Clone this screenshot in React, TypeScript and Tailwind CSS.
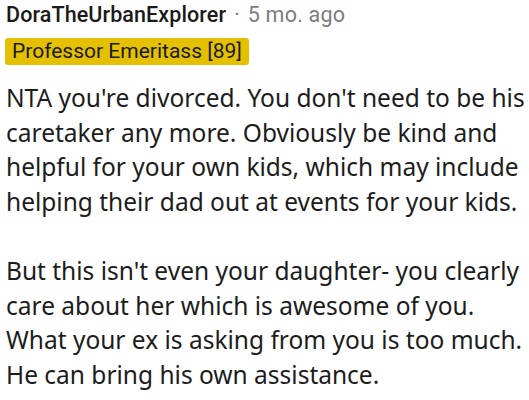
const para1 = [
  "NTA you're divorced. You don't need to be his",
  "caretaker any more. Obviously be kind and",
  "helpful for your own kids, which may include",
  "helping their dad out at events for your kids.",
];

const para2 = [
  "But this isn't even your daughter- you clearly",
  "care about her which is awesome of you.",
  "What your ex is asking from you is too much.",
  "He can bring his own assistance.",
];

export default function App() {
  return (
    <div className="w-[529px] h-[400px] overflow-hidden bg-white px-[6px] pt-[1px]">
      <div className="flex items-baseline text-[21.5px] leading-[28px] font-['Roboto',sans-serif]">
        <span className="font-medium text-[#1a1a1b] tracking-[0.1px]">DoraTheUrbanExplorer</span>
        <span className="ml-[8px] text-[#7c7c7c]">·</span>
        <span className="ml-[8px] text-[#7c7c7c] tracking-[0.2px]">5 mo. ago</span>
      </div>
      <div className="mt-[9px] -ml-[1px] inline-block rounded-[3px] bg-[#e4c000] px-[7px] text-[21px] leading-[27px] text-[#1a1a1b] font-['Roboto',sans-serif]">
        Professor Emeritass [89]
      </div>
      <div className="mt-[16px] font-['Noto_Sans',sans-serif] text-[24.5px] leading-[34.6px] text-[#1c1c1c] whitespace-nowrap">
        <p>
          {para1.map((l) => (
            <span key={l} className="block">{l}</span>
          ))}
        </p>
        <p className="mt-[34.6px]">
          {para2.map((l) => (
            <span key={l} className="block">{l}</span>
          ))}
        </p>
      </div>
    </div>
  );
}
